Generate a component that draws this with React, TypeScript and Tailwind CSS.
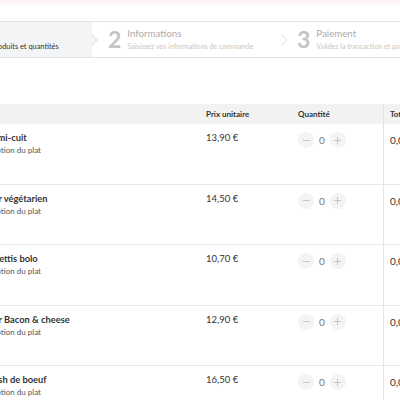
import { Minus, Plus } from "lucide-react";

const DISHES = [
  { name: "Thon mi-cuit", price: "13,90 €" },
  { name: "Burger végétarien", price: "14,50 €" },
  { name: "Spaghettis bolo", price: "10,70 €" },
  { name: "Burger Bacon & cheese", price: "12,90 €" },
  { name: "Goulash de boeuf", price: "16,50 €" },
];

function Arrow({ active }: { active?: boolean }) {
  return (
    <div
      className={`absolute right-[-4px] top-1/2 z-10 h-[8px] w-[8px] -translate-y-1/2 rotate-45 border-t border-r border-[#e2e2e2] ${
        active ? "bg-[#f3f4f5]" : "bg-white"
      }`}
    />
  );
}

export default function App() {
  return (
    <div className="h-[400px] w-[400px] overflow-hidden bg-white font-['Lato','Liberation_Sans',sans-serif]">
      <div className="h-[6px] bg-gradient-to-b from-[#fcf1f1] to-white" />

      {/* Etapes */}
      <div className="mt-[15px] flex h-[37px] border-y border-[#e4e4e4] ml-[-98px] w-[700px]">
        <div className="relative flex w-[190px] shrink-0 items-center bg-[#f3f4f5] pl-[41px]">
          <div className="flex flex-col leading-none">
            <span className="text-[9.5px] font-bold text-[#333]">Panier</span>
            <span className="mt-[4px] whitespace-nowrap text-[7.4px] text-[#333]">
              Choisissez vos produits et quantités
            </span>
          </div>
          <Arrow active />
        </div>
        <div className="relative flex w-[190px] shrink-0 items-center pl-[16px]">
          <span className="mr-[6px] text-[23px] font-bold leading-none text-[#c4c4c4]">2</span>
          <div className="flex flex-col leading-none">
            <span className="text-[9.7px] text-[#ababab]">Informations</span>
            <span className="mt-[4px] whitespace-nowrap text-[7.1px] text-[#c6c6c6]">
              Saisissez vos informations de commande
            </span>
          </div>
          <Arrow />
        </div>
        <div className="relative flex w-[220px] shrink-0 items-center pl-[15px]">
          <span className="mr-[6px] text-[23px] font-bold leading-none text-[#c4c4c4]">3</span>
          <div className="flex flex-col leading-none">
            <span className="text-[9.7px] text-[#ababab]">Paiement</span>
            <span className="mt-[4px] whitespace-nowrap text-[7.1px] text-[#c6c6c6]">
              Validez la transaction et payez
            </span>
          </div>
        </div>
      </div>

      {/* Tableau */}
      <div className="mt-[46px] ml-[-26px] w-[480px]">
        <div className="grid h-[20px] grid-cols-[232px_92px_85px_1fr] items-center bg-[#f2f2f2] text-[8px] font-bold text-[#333]">
          <div />
          <div>Prix unitaire</div>
          <div>Quantité</div>
          <div className="flex h-full items-center border-l border-[#e4e4e4] pl-[6px]">Total</div>
        </div>
        {DISHES.map((d) => (
          <div
            key={d.name}
            className="grid h-[60.5px] grid-cols-[232px_92px_85px_1fr] border-b border-[#e8e8e8] text-[#333]"
          >
            <div className="pt-[9px] leading-none">
              <div className="text-[9.3px] font-bold">{d.name}</div>
              <div className="mt-[4px] text-[8px] text-[#555]">Description du plat</div>
            </div>
            <div className="pt-[9px] text-[9.5px] leading-none">{d.price}</div>
            <div className="flex items-start gap-[3px] pt-[8px]">
              <span className="flex h-[16px] w-[16px] items-center justify-center rounded-full bg-[#f4f4f4] text-[#999]">
                <Minus size={11} strokeWidth={1.1} />
              </span>
              <span className="mx-[2px] text-[10px] leading-[16px] text-[#777]">0</span>
              <span className="flex h-[16px] w-[16px] items-center justify-center rounded-full bg-[#f4f4f4] text-[#999]">
                <Plus size={11} strokeWidth={1.1} />
              </span>
            </div>
            <div className="border-l border-[#e4e4e4] pl-[6px] pt-[11px] text-[10px] leading-none">
              0,00 €
            </div>
          </div>
        ))}
      </div>
    </div>
  );
}
